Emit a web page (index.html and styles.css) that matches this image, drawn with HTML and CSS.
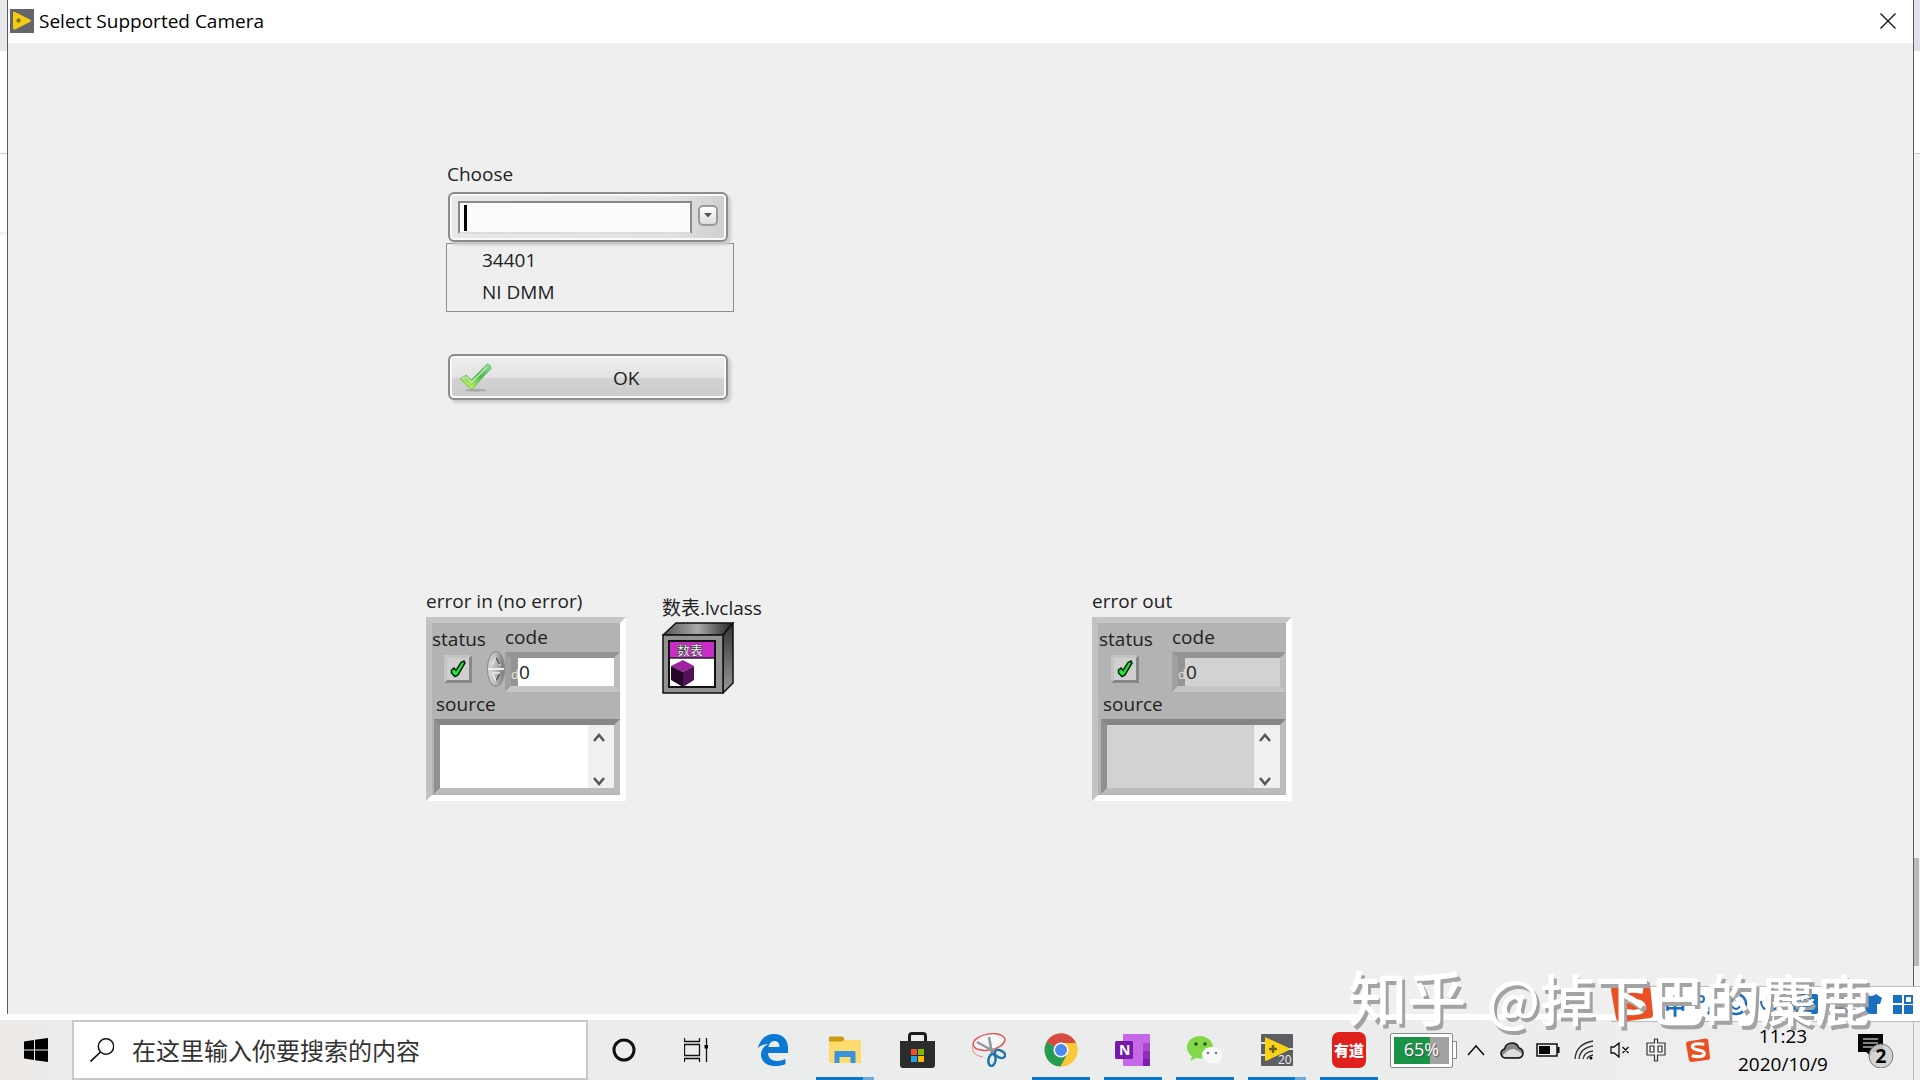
FILE: index.html
```html
<!DOCTYPE html>
<html lang="zh-CN">
<head>
<meta charset="utf-8">
<title>Select Supported Camera</title>
<link rel="stylesheet" href="styles.css">
</head>
<body>
<div class="desktop">
  <div class="edge edge-left"></div>
  <main class="window">
    <header class="titlebar">
      <svg class="app-icon" viewBox="0 0 24 24"><rect width="24" height="24" fill="#64646a"/><path d="M3 3.500Q3 2 5 3L20 10.500Q22 12 20 13L5 20.500Q3 21 3 19Z" fill="#f2cb12"/><path d="M6.500 11.500h4M8.500 9.500v4" stroke="#77702c" stroke-width="2.500"/></svg>
      <h1 class="title">Select Supported Camera</h1>
      <button class="close" aria-label="Close"><svg viewBox="0 0 16 16" width="16" height="16"><path d="M.5.500l15 15M15.500.500l-15 15" stroke="#111" stroke-width="1.300"/></svg></button>
    </header>
    <section class="panel">
      <form class="chooser">
        <label class="text" for="choose">Choose</label>
        <div class="combo">
          <input class="combo-input" id="choose" type="text">
          <span class="caret"></span>
          <button class="combo-button" type="button" aria-label="Open list"><svg viewBox="0 0 10 6" width="10" height="6"><path d="M1 1h8L5 5.500Z" fill="#555"/></svg></button>
        </div>
        <ul class="options text">
          <li>34401</li>
          <li>NI DMM</li>
        </ul>
        <button class="ok text" type="button">
          <svg class="ok-icon" viewBox="0 0 36 32"><defs><linearGradient id="leaf" x1="1" y1="0" x2="0.300" y2="1"><stop offset="0" stop-color="#9bdc9c"/><stop offset="0.500" stop-color="#48b650"/><stop offset="1" stop-color="#d0f25a"/></linearGradient></defs><ellipse cx="18" cy="29" rx="12" ry="1.500" fill="#aaa"/><path d="M1 17L8 13L13 18L30 1Q34 2 34 6Q24 16 15 27Q14 28 12 27Z" fill="url(#leaf)" stroke="#70bb72"/><path d="M3 17l5-2 5 6L30 4" fill="none" stroke="#bdecb4" stroke-width="1.500"/></svg>
          <span class="ok-text">OK</span>
        </button>
      </form>

      <div class="terminals">
        <section class="terminal">
          <h2 class="text">error in (no error)</h2>
          <div class="cluster">
            <div class="fields">
              <label class="field status"><span class="text">status</span>
                <span class="led"><input type="checkbox" checked><svg viewBox="0 0 16 18" width="16" height="18"><path d="M1.500 10L4 8l2 2.500L11 2.500l3-1.500 1 2L8 15l-3 1.500L1.500 13Z" fill="#1fe83a" stroke="#06240a" stroke-width="1.500"/></svg></span>
              </label>
              <button class="spinner" type="button" aria-label="Change code"><svg viewBox="0 0 18 36" width="18" height="36"><defs><linearGradient id="knob"><stop offset="0" stop-color="#ddd"/><stop offset="0.500" stop-color="#b8b8b8"/><stop offset="1" stop-color="#777"/></linearGradient></defs><ellipse cx="9" cy="18" rx="8.500" ry="17.500" fill="url(#knob)" stroke="#858585"/><path d="M1 18h16" stroke="#eee" stroke-width="2"/><path d="M5 14l3.500-7L13 14" fill="none" stroke="#eee" stroke-width="1.500"/><path d="M9 7l3.500 6M13 22l-4 8" fill="none" stroke="#555" stroke-width="1.500"/><path d="M5 22h8M5 22l4 8" fill="none" stroke="#eee" stroke-width="1.500"/></svg></button>
              <div class="field code"><label class="text" for="code-in">code</label>
                <span class="number"><span class="radix">d</span><input class="text" id="code-in" type="text" value="0"></span>
              </div>
            </div>
            <label class="text source-label" for="source-in">source</label>
            <div class="source">
              <textarea id="source-in"></textarea>
              <div class="scroll"><svg viewBox="0 0 12 10" width="12" height="10"><path d="M1 8l5-6 5 6" fill="none" stroke="#555" stroke-width="2.500"/></svg><svg viewBox="0 0 12 10" width="12" height="10"><path d="M1 2l5 6 5-6" fill="none" stroke="#555" stroke-width="2.500"/></svg></div>
            </div>
          </div>
        </section>

        <section class="lvclass">
          <h2 class="text cjk">数表.lvclass</h2>
          <svg viewBox="0 0 72 72" width="72" height="72"><defs><linearGradient id="metal"><stop offset="0" stop-color="#555"/><stop offset="0.500" stop-color="#aaa"/><stop offset="1" stop-color="#222"/></linearGradient><linearGradient id="side" x1="0" y1="0" x2="0" y2="1"><stop offset="0" stop-color="#333"/><stop offset="1" stop-color="#999"/></linearGradient></defs>
            <path d="M1 13L14 1H71L61 13Z" fill="url(#metal)" stroke="#111" stroke-width="1.500"/><path d="M61 13L71 1V61L61 71Z" fill="url(#side)" stroke="#111" stroke-width="1.500"/><rect x="1" y="13" width="60" height="58" fill="#929292" stroke="#111" stroke-width="1.500"/>
            <rect x="7" y="19" width="46" height="46" fill="#fff" stroke="#111" stroke-width="2"/><rect x="8" y="20" width="44" height="16" fill="#cb2bc9"/><path d="M7 36h46" stroke="#222" stroke-width="1.500"/>
            <text x="15" y="33" class="badge">数表</text>
            <path d="M9 44l12-6 11 6-11 6Z" fill="#9d24a0"/><path d="M9 44l12 6v15L9 58Z" fill="#250528"/><path d="M21 50l11-6v14l-11 7Z" fill="#521055"/></svg>
        </section>

        <section class="terminal readout">
          <h2 class="text">error out</h2>
          <div class="cluster">
            <div class="fields">
              <label class="field status"><span class="text">status</span>
                <span class="led"><input type="checkbox" checked><svg viewBox="0 0 16 18" width="16" height="18"><path d="M1.500 10L4 8l2 2.500L11 2.500l3-1.500 1 2L8 15l-3 1.500L1.500 13Z" fill="#1fe83a" stroke="#06240a" stroke-width="1.500"/></svg></span>
              </label>
              <div class="field code"><label class="text" for="code-out">code</label>
                <span class="number"><span class="radix">d</span><input class="text" id="code-out" type="text" value="0" readonly></span>
              </div>
            </div>
            <label class="text source-label" for="source-out">source</label>
            <div class="source">
              <textarea id="source-out" readonly></textarea>
              <div class="scroll"><svg viewBox="0 0 12 10" width="12" height="10"><path d="M1 8l5-6 5 6" fill="none" stroke="#555" stroke-width="2.500"/></svg><svg viewBox="0 0 12 10" width="12" height="10"><path d="M1 2l5 6 5-6" fill="none" stroke="#555" stroke-width="2.500"/></svg></div>
            </div>
          </div>
        </section>
      </div>
    </section>
  </main>
  <div class="edge edge-right"><div class="thumb"></div></div>
</div>

<footer class="taskbar">
  <button class="start" aria-label="开始"><svg viewBox="0 0 24 24" width="24" height="24"><path d="M0 3.500L10 2v9.500H0ZM11 1.800L24 0v11.500H11ZM0 12.500h10V22L0 20.500ZM11 12.500h13V24l-13-1.800Z"/></svg></button>
  <label class="search">
    <svg viewBox="0 0 24 24" width="24" height="24"><circle cx="16" cy="8.500" r="7.700" fill="none" stroke="#111" stroke-width="1.500"/><path d="M10.500 14L.5 23.500" stroke="#111" stroke-width="1.700"/></svg>
    <input type="text" placeholder="在这里输入你要搜索的内容" aria-label="搜索">
  </label>
  <nav class="apps">
    <button class="app" aria-label="Cortana"><svg viewBox="0 0 24 24" width="24" height="24"><circle cx="12" cy="12" r="10" fill="none" stroke="#111" stroke-width="3"/></svg></button>
    <button class="app" aria-label="任务视图"><svg viewBox="0 0 24 24" width="24" height="24"><path d="M.5 0v3.500h15V0M.5 24v-3.500h15V24M.5 6.500h15v11H.5ZM22.500 0v24" fill="none" stroke="#111" stroke-width="1.300"/><rect x="20.500" y="7" width="3.500" height="3.500"/></svg></button>
    <span class="spacer"></span>
    <button class="app" aria-label="Edge"><svg viewBox="0 0 30 32" width="30" height="32"><path d="M0 14C2 5 8 0 16 0c9 0 14 6 14 14v5H10c0 5 4 8 9 8 3 0 6-.8 8.500-2v5c-3 1.500-6 2-10 2C8 32 3 27 3 20.500 3 16 6 12 10 10c-4 0-8 2-10 4ZM10.500 13h11c0-4-2-6-5-6s-5.500 2.500-6 6Z" fill="#0b78d4"/></svg></button>
    <button class="app open more" aria-label="文件资源管理器"><svg viewBox="0 0 33 28" width="33" height="28"><path d="M0 2Q0 1 1 1h13l2 3h16v23H1Q0 27 0 26Z" fill="#fddb6c"/><path d="M0 1.500Q0 .5 1 .5h12.500l2 2-2 3H0Z" fill="#c99b17"/><path d="M5.500 27V16q0-1 1-1h19q1 0 1 1v11h-5v-6h-11v6Z" fill="#3a92de"/></svg></button>
    <button class="app" aria-label="Microsoft Store"><svg viewBox="0 0 35 36" width="35" height="36"><path d="M9.500 10V4Q9.500 1.500 12 1.500h11q2.500 0 2.500 2.500v6" fill="none" stroke="#1c1c1c" stroke-width="3"/><path d="M0 9h35v24q0 3-3 3H3q-3 0-3-3Z" fill="#2c2c2c"/><path d="M11 17h6v6h-6Z" fill="#f05022"/><path d="M18 17h6v6h-6Z" fill="#7fba00"/><path d="M11 24h6v6h-6Z" fill="#1aa3ee"/><path d="M18 24h6v6h-6Z" fill="#ffb900"/></svg></button>
    <button class="app" aria-label="截图工具"><svg viewBox="0 0 34 34" width="34" height="34"><ellipse cx="17" cy="9" rx="16" ry="8" transform="rotate(-10 17 9)" fill="#f7f7f7" stroke="#e15654" stroke-width="1.500"/><path d="M1 12Q-2 22 11 24" fill="none" stroke="#e98482"/><path d="M17 4l3 17M5 9l18 10" stroke="#8e989e" stroke-width="2.500"/><ellipse cx="28" cy="21" rx="5.500" ry="3.500" transform="rotate(25 28 21)" fill="none" stroke="#1d75ac" stroke-width="2.500"/><ellipse cx="20" cy="27" rx="3.500" ry="6" transform="rotate(10 20 27)" fill="none" stroke="#1d75ac" stroke-width="2.500"/></svg></button>
    <button class="app open" aria-label="Chrome"><svg viewBox="0 0 34 34" width="34" height="34"><circle cx="17" cy="17" r="16.500" fill="#fbc83a"/><path d="M17 17L2.500 9A16.500 16.500 0 0 1 32.500 11H17Z" fill="#d64c40"/><path d="M17 17l6 5-6.500 11.500A16.500 16.500 0 0 1 2.600 9Z" fill="#259b56"/><path d="M17 10h15.200A16.500 16.500 0 0 1 16.500 33.500L24 20Z" fill="#fbc83a"/><circle cx="17" cy="17" r="7.500" fill="#fff"/><circle cx="17" cy="17" r="6" fill="#4a89f0"/></svg></button>
    <button class="app open" aria-label="OneNote"><svg viewBox="0 0 36 34" width="36" height="34"><rect x="8" y="1" width="27" height="32" rx="1" fill="#c569e6"/><path d="M28 10h7v8h-7Z" fill="#a648cd"/><path d="M28 18h7v8h-7Z" fill="#8b31b4"/><path d="M28 26h7v7h-7Z" fill="#7a1da8"/><rect y="8" width="18" height="18" rx="1.500" fill="#7719aa"/><text x="4" y="22" class="icon-n">N</text></svg></button>
    <button class="app open" aria-label="微信"><svg viewBox="0 0 36 30" width="36" height="30"><path d="M13 1C5.500 1 0 6 0 12q0 6 5 9.500L3.500 26 9 23q16 3 17-11C26 6 20 1 13 1Z" fill="#83d849"/><path d="M25 12c-6 0-10 3.500-10 8 0 6 7 9.500 14 7.500l4 2-1-3.500c2.500-2 3-4 3-6 0-4.500-4-8-10-8Z" fill="#f8f8f8"/><circle cx="9" cy="9" r="1.700" fill="#254b1a"/><circle cx="18" cy="9" r="1.700" fill="#254b1a"/><circle cx="21" cy="18" r="1.300" fill="#777"/><circle cx="29" cy="18" r="1.300" fill="#777"/></svg></button>
    <button class="app open more" aria-label="LabVIEW"><svg viewBox="0 0 34 34" width="34" height="34"><rect x="1" y="1" width="32" height="32" rx="1" fill="#5d5e62"/><path d="M0 10h6M0 22h6M26 16h8" stroke="#ddd" stroke-width="2"/><path d="M5 5q0-1 1-.5L29 15q1 1 0 2L6 28q-1 0-1-1Z" fill="#fbd316"/><path d="M9 16h8M13 12v8" stroke="#6b6019" stroke-width="2.500"/><text x="18" y="31" class="icon-20">20</text></svg></button>
    <button class="app open" aria-label="有道"><span class="youdao">有道</span></button>
  </nav>
  <div class="tray">
    <div class="power"><span class="power-cell">65%</span><span class="power-tip"></span></div>
    <button class="tray-item" aria-label="显示隐藏的图标"><svg viewBox="0 0 18 12" width="18" height="12"><path d="M1 11l8-9 8 9" fill="none" stroke="#111" stroke-width="1.500"/></svg></button>
    <button class="tray-item" aria-label="OneDrive"><svg viewBox="0 0 24 17" width="24" height="17"><path d="M5 16Q1 15 1 11.500 1 8 4.500 7 6 1 12 1q5 0 7 5 4 1 4 5t-4 5Z" fill="#888" stroke="#111" stroke-width="1.500"/><path d="M3 13Q9 6 14 7q7 3 8 5-1 3-4 3H6Q3 15 3 13Z" fill="#ddd"/></svg></button>
    <button class="tray-item" aria-label="电池"><svg viewBox="0 0 24 14" width="24" height="14"><path d="M1 1h20v12H1Z" fill="none" stroke="#111" stroke-width="1.500"/><path d="M3 3h11v8H3ZM21.500 4H23.500v6h-2Z"/></svg></button>
    <button class="tray-item" aria-label="网络"><svg viewBox="0 0 20 20" width="20" height="20"><g fill="none" stroke="#333" stroke-width="1.300"><path d="M1 19Q2 4 19 1M5 19Q6 8 19 6M9 19q1-7 10-8M13 19q1-3 6-4"/></g><circle cx="17" cy="18" r="1.500"/></svg></button>
    <button class="tray-item" aria-label="音量"><svg viewBox="0 0 20 16" width="20" height="16"><path d="M1 5h3l5-4v14l-5-4H1ZM12.500 5l6 6M18.500 5l-6 6" fill="none" stroke="#111" stroke-width="1.300"/></svg></button>
    <button class="tray-item" aria-label="输入法"><svg viewBox="0 0 20 24" width="20" height="24"><path d="M8.500 1h3v4H19v12h-7.500v6h-3v-6H1V5h7.500ZM4 8v6h4V8ZM12 8v6h4V8Z" fill="#f4f4f4" stroke="#333" stroke-width="1.200"/></svg></button>
    <button class="tray-item wide" aria-label="搜狗输入法"><svg viewBox="0 0 42 42" width="24" height="24"><path d="M3 6L35 1q3 0 4 4l3 29q0 4-3 4l-29 4q-4 0-5-4L0 10Q0 7 3 6Z" fill="#ea5022"/><path d="M32 11Q12 8 11 15c0 8 21 4 21 12 0 7-13 6-22 4" fill="none" stroke="#fff" stroke-width="5.500"/></svg></button>
    <div class="clock"><time>11:23</time><time>2020/10/9</time></div>
    <button class="notice" aria-label="通知"><svg viewBox="0 0 36 36" width="36" height="36"><path d="M0 2h25v18h-12v4l-5-4H0Z" fill="#050505"/><path d="M5 7h15M5 11h15M5 15h10" stroke="#fff" stroke-width="1.200"/><circle cx="23" cy="24" r="12" fill="#d0d0d0" fill-opacity=".9" stroke="#777"/><text x="23" y="31" class="icon-2">2</text></svg></button>
  </div>
</footer>

<aside class="ime">
  <svg class="ime-logo" viewBox="0 0 42 42" width="42" height="42"><path d="M3 6L35 1q3 0 4 4l3 29q0 4-3 4l-29 4q-4 0-5-4L0 10Q0 7 3 6Z" fill="#ea5022"/><path d="M32 11Q12 8 11 15c0 8 21 4 21 12 0 7-13 6-22 4" fill="none" stroke="#fff" stroke-width="5.500"/></svg>
  <span class="ime-mode">中</span>
  <svg viewBox="0 0 16 22" width="16" height="22"><circle cx="4" cy="6" r="3" fill="none" stroke="#1b6fc0" stroke-width="2"/><path d="M12 14q3 3-1 7" fill="none" stroke="#1b6fc0" stroke-width="3"/></svg>
  <svg viewBox="0 0 24 24" width="24" height="24"><circle cx="12" cy="12" r="10" fill="none" stroke="#1b6fc0" stroke-width="2.500"/><path d="M7 13q5 8 10 0M8.500 7v3M15.500 7v3" fill="none" stroke="#1b6fc0" stroke-width="2"/></svg>
  <svg viewBox="0 0 22 24" width="22" height="24"><rect x="7" y="1" width="8" height="13" rx="4" fill="#1b6fc0"/><path d="M2 9q0 9 9 9t9-9M11 18v5M6 23h10" fill="none" stroke="#1b6fc0" stroke-width="2"/></svg>
  <svg viewBox="0 0 26 20" width="26" height="20"><rect width="26" height="20" rx="2" fill="#1b6fc0"/><path d="M4 6h18M4 10h18M8 15h10" stroke="#fff" stroke-width="2" stroke-dasharray="3 2"/></svg>
  <svg viewBox="0 0 20 22" width="20" height="22"><circle cx="10" cy="6" r="5" fill="#76869d"/><path d="M0 22q0-9 10-9t10 9Z" fill="#76869d"/></svg>
  <svg viewBox="0 0 22 22" width="22" height="22"><path d="M6 1q5 4 10 0l6 4-2 6h-3v10H5V11H2L0 5Z" fill="#1b6fc0"/></svg>
  <svg viewBox="0 0 20 20" width="20" height="20"><path d="M0 1h9v8H0ZM0 11h9v9H0ZM11 11h9v9h-9Z" fill="#1b6fc0"/><path d="M12 2h7v7h-7Z" fill="none" stroke="#1b6fc0" stroke-width="2"/></svg>
</aside>
<div class="watermark"><span class="site">知乎</span> @掉下巴的麋鹿</div>
</body>
</html>
```
FILE: styles.css
```css
* { box-sizing: border-box; }
body {
  margin: 0;
  min-height: 100vh;
  display: flex;
  flex-direction: column;
  position: relative;
  overflow: hidden;
  background: #fff;
  color: #111;
  font-family: "Open Sans", "Noto Sans", "Noto Sans CJK SC", sans-serif;
}
h1, h2, ul { margin: 0; padding: 0; font-weight: 400; list-style: none; }
button { border: 0; padding: 0; background: none; font: inherit; color: inherit; }
input, textarea { border: 0; padding: 0; margin: 0; outline: 0; border-radius: 0; font: inherit; color: inherit; }
svg { display: block; flex: none; }
.text { font-size: 19px; line-height: 24px; color: #222; }
.cjk { white-space: nowrap; }

/* dialog */
.desktop { flex: 1; display: flex; padding-bottom: 6px; }
.edge { flex: none; width: 7px; }
.edge-left { background: linear-gradient(#e6e8eb 51px, #fff 51px, #fff 153px, #ccc 153px, #ccc 154px, #fff 154px, #fff 232px, #eee 232px, #fff 236px); }
.edge-right { width: 6px; padding-top: 858px; background: linear-gradient(#dfe3e8 51px, #fff 51px, #fff 153px, #ccc 153px, #ccc 154px, #f3f3f3 154px); }
.thumb { width: 5px; height: 108px; background: #b9b9b9; }
.window {
  flex: 1;
  display: flex;
  flex-direction: column;
  border-left: 1px solid #5c5c5c;
  border-right: 1px solid #5c5c5c;
}
.titlebar { height: 43px; display: flex; align-items: center; padding: 0 17px 1px 2px; background: #fff; }
.app-icon { width: 24px; height: 24px; }
.title { flex: 1; margin-left: 5px; font-size: 19px; line-height: 26px; color: #000; }
.close { width: 16px; height: 16px; }
.panel { flex: 1; background: #efefef; padding: 119px 0 0 418px; }

/* chooser */
.chooser { width: 288px; margin-left: 20px; }
.chooser label { display: block; margin: 0 1px 6px; }
.combo, .ok {
  width: 280px;
  margin-left: 2px;
  border: 2px solid #8c8c8c;
  border-radius: 6px;
  box-shadow: inset 0 0 0 2px #f9f9f9, 3px 3px 3px #ccc;
}
.combo { height: 50px; display: flex; align-items: center; padding: 0 8px; background: linear-gradient(90deg, #e8e8e8, #e2e2e2 80%, #cfcfcf); position: relative; }
.combo-input { width: 234px; height: 33px; border: 2px solid #888; border-bottom-color: #ddd; background: #fbfbfb; padding: 0 6px; }
.caret { position: absolute; left: 14px; top: 11px; width: 3px; height: 26px; background: #000; }
.combo-button { display: grid; place-items: center; width: 20px; height: 21px; margin: 0 0 4px 6px; border: 2px solid #9a9a9a; border-radius: 5px; background: linear-gradient(#fff, #ddd); }
.options { height: 69px; margin-top: 1px; padding-left: 35px; border: 1px solid #8e8e8e; }
.options li { line-height: 32px; }
.ok { display: flex; align-items: center; height: 46px; margin-top: 42px; padding-top: 2px; background: linear-gradient(#eee, #e3e3e3 50%, #d2d2d2 55%, #cbcbcb); }
.ok-icon { width: 34px; height: 32px; margin-left: 9px; }
.ok-text { margin-left: 120px; }

/* clusters */
.terminals { display: flex; align-items: flex-start; margin-top: 189px; }
.terminal { width: 200px; }
.terminal h2 { margin-bottom: 4px; }
.cluster {
  height: 184px;
  border: 6px solid;
  border-color: #c6c6c6 #fff #fff #c2c2c2;
  background: #b3b3b3;
  padding-left: 2px;
}
.fields { display: flex; height: 69px; }
.field { display: flex; flex-direction: column; }
.status { flex: none; width: 54px; margin-left: -2px; padding-top: 4px; }
.led { position: relative; display: grid; place-items: center; width: 28px; height: 28px; margin: 4px 0 0 12px; border: 3px solid; border-color: #c4c4c4 #888 #888 #c4c4c4; background: #cfcfcf; }
.led input { position: absolute; inset: 0; appearance: none; }
.spinner { flex: none; align-self: flex-start; width: 18px; height: 36px; margin: 28px 0 0 1px; }
.code { flex: 1; min-width: 0; padding-top: 2px; }
.number { display: flex; height: 40px; margin-top: 3px; border: 6px solid; border-color: #949494 #bcbcbc #c6c6c6 #a0a0a0; background: #fff; }
.number input { flex: 1; width: 0; min-width: 0; background: #fff; padding-left: 1px; }
.radix { flex: none; width: 7px; background: #949494; color: #e5e5e5; font-size: 13px; line-height: 32px; }
.source-label { display: block; padding: 0 0 3px 2px; }
.source { display: flex; height: 75px; border: 6px solid; border-color: #858585 #bcbcbc #bcbcbc #909090; background: #fff; }
.source textarea { flex: 1; width: 0; min-width: 0; resize: none; background: #fff; }
.scroll { width: 26px; display: flex; flex-direction: column; justify-content: space-between; align-items: center; padding: 8px 4px 2px 0; background: #f0f0f0; }
.readout .code { margin-left: 19px; }
.readout .number, .readout .number input, .readout .source textarea { background: #d2d2d2; }
.readout .cluster { padding-left: 3px; }
.lvclass { width: 72px; margin: 7px 358px 0 36px; }
.lvclass h2 { margin-bottom: 2px; }
.badge { font: 700 13px "Noto Sans CJK SC", sans-serif; fill: #fff; stroke: #333; stroke-width: .5px; }

/* taskbar */
.taskbar { height: 60px; display: flex; align-items: stretch; padding-right: 6px; background: linear-gradient(90deg, #eeeae7, #ebedec 5%, #ebedec 70%, #eee); }
.start { display: grid; place-items: center; width: 72px; }
.search { display: flex; align-items: center; width: 516px; border: 2px solid #c9c9c9; background: #fff; padding-left: 16px; }
.search input { flex: 1; margin-left: 18px; font: 24px/34px "Noto Sans CJK SC", sans-serif; }
.search input::placeholder { color: #333; opacity: 1; }
.apps { display: flex; }
.app { display: grid; place-items: center; width: 72px; padding-top: 3px; border-bottom: 3px solid transparent; }
.spacer { width: 5px; }
.open { background: linear-gradient(#0c78cc, #0c78cc) 50% 100% / 58px 3px no-repeat border-box; }
.more { background-image: linear-gradient(90deg, #0c78cc 47px, #70a8dc 47px); }
.youdao { width: 34px; height: 36px; border-radius: 7px; background: #df201c; color: #fff; font: 900 15px/35px "Noto Sans CJK SC", sans-serif; text-align: center; }
.icon-n { font: 700 14px "Open Sans", sans-serif; fill: #fff; }
.icon-20 { font: 12px "Open Sans", sans-serif; fill: #eee; }
.icon-2 { font: 700 19px "Open Sans", sans-serif; text-anchor: middle; }
.tray { display: flex; align-items: center; margin-left: auto; }
.power { display: flex; align-items: center; width: 68px; }
.power-cell { width: 63px; height: 35px; border: 1px solid #888; border-radius: 2px; background: linear-gradient(90deg, #199447 36px, #a3a3a3 36px) 50% 50% / 55px 27px no-repeat #fff; color: #fff; font-size: 18px; line-height: 31px; text-align: center; text-shadow: 1px 1px 1px #555; }
.power-tip { width: 4px; height: 18px; border: 1px solid #888; border-left: 0; background: #fff; }
.tray-item { display: grid; place-items: center; width: 36px; height: 60px; }
.wide { width: 48px; }
.clock { display: flex; flex-direction: column; width: 122px; text-align: center; font-size: 19px; line-height: 28px; color: #000; }
.notice { display: grid; place-items: center start; width: 70px; height: 60px; padding-left: 14px; border-right: 1px solid #bbb; }

/* input-method bar and the stamp float over the desktop */
.ime { position: absolute; right: 0; bottom: 58px; display: flex; align-items: center; gap: 11px; height: 36px; padding-right: 7px; background: linear-gradient(#fff, #fff) 100% 0 / calc(100% - 20px) 100% no-repeat; border: 1px solid #bbb; border-width: 1px 0; }
.ime-logo { margin-bottom: 6px; }
.ime-mode { width: 22px; color: #1b6fc0; font: 700 22px/34px "Noto Sans CJK SC", sans-serif; }
.watermark { position: absolute; right: 50px; bottom: 43px; color: #fff; font: 500 55px/80px "Noto Sans CJK SC", sans-serif; text-shadow: 3px 4px 0 #a3a3a3; white-space: nowrap; }
.site { margin-right: 8px; font-size: 59px; }
```
